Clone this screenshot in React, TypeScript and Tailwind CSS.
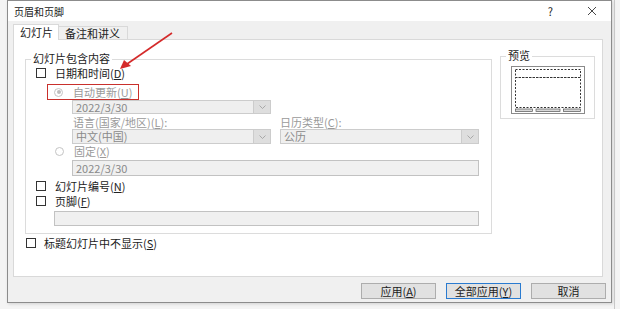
import React from "react";

const font = { fontFamily: '"Noto Sans CJK SC", "Liberation Sans", sans-serif' };

function Key({ k }: { k: string }) {
  return (
    <span>
      (<span className="underline underline-offset-1">{k}</span>)
    </span>
  );
}

function CheckBox() {
  return <div className="w-[10px] h-[10px] border border-[#333333] bg-white shrink-0"></div>;
}

function Radio({ checked }: { checked?: boolean }) {
  return (
    <div className="w-[9px] h-[9px] rounded-full border border-[#c4c4c4] bg-white flex items-center justify-center shrink-0">
      {checked && <div className="w-[4px] h-[4px] rounded-full bg-[#bdbdbd]"></div>}
    </div>
  );
}

function Select({ value, width }: { value: string; width: string }) {
  return (
    <div className={`${width} h-full border border-[#cccccc] bg-[#efefef] flex items-center`}>
      <span className="flex-1 pl-[3px] text-[#8a8a8a] leading-none">{value}</span>
      <div className="w-[17px] h-full bg-[#dedede] border-l border-[#cccccc] flex items-center justify-center">
        <svg width="7" height="4" viewBox="0 0 7 4">
          <path d="M0.5 0.5 L3.5 3.5 L6.5 0.5" fill="none" stroke="#9a9a9a" strokeWidth="0.8" />
        </svg>
      </div>
    </div>
  );
}

function Button({ label, k, focused }: { label: string; k: string; focused?: boolean }) {
  return (
    <div
      className={`w-[75px] h-[16px] flex items-center justify-center bg-[#e1e1e1] border ${
        focused ? "border-[#2a7bd0]" : "border-[#adadad]"
      } text-[#222222] leading-none`}
    >
      {label}
      {k && <Key k={k} />}
    </div>
  );
}

export default function App() {
  return (
    <div className="w-[620px] h-[309px] bg-[#f4f4f4] pl-[7px] relative overflow-hidden text-[11px] leading-[13px]" style={font}>
      <div className="absolute left-[614px] top-0 w-px h-full bg-[#c8c8c8]"></div>
      <div className="w-[605px] h-[303px] border border-[#8c8c8c] bg-[#f0f0f0] flex flex-col shadow-[1px_1px_3px_rgba(0,0,0,0.15)]">
        {/* title bar */}
        <div className="h-[20px] bg-white flex items-center pl-[6px] pr-[14px] text-[10px] text-[#222222]">
          <span className="flex-1">页眉和页脚</span>
          <span className="mr-[34px] text-[11px]">?</span>
          <svg width="10" height="10" viewBox="0 0 10 10">
            <path d="M1 1 L9 9 M9 1 L1 9" stroke="#333" strokeWidth="0.9" />
          </svg>
        </div>

        <div className="flex flex-col px-[5px] pt-[2px]">
          {/* tabs */}
          <div className="flex items-end h-[16px]">
            <div className="h-[16px] w-[46px] bg-white border border-b-0 border-[#d9d9d9] pl-[6px] flex items-center text-[#222222] relative z-10 -mb-px">
              幻灯片
            </div>
            <div className="h-[13px] w-[69px] border border-l-0 border-b-0 border-[#d9d9d9] pl-[6px] flex items-center text-[#222222]">
              备注和讲义
            </div>
          </div>

          {/* panel */}
          <div className="w-[590px] h-[238px] bg-white border border-[#d9d9d9] flex pl-[11px] pt-[19px]">
            <div className="flex flex-col">
              <div className="w-[467px] h-[175px] border border-[#dcdcdc] relative flex flex-col pt-[6px] text-[#222222]">
                <span className="absolute left-[5px] -top-[7px] bg-white px-[2px] leading-none">幻灯片包含内容</span>

                <div className="h-[14px] flex items-center pl-[10px] gap-[9px]">
                  <CheckBox />
                  <span>
                    日期和时间<Key k="D" />
                  </span>
                </div>

                <div className="mt-[4px] h-[16px] flex">
                  <div className="ml-[21px] w-[92px] h-full border-[1.5px] border-[#c9302c] flex items-center pl-[6px] gap-[10px] text-[#9a9a9a]">
                    <Radio checked />
                    <span>
                      自动更新<Key k="U" />
                    </span>
                  </div>
                </div>

                <div className="h-[14px] pl-[46px]">
                  <Select value="2022/3/30" width="w-[199px]" />
                </div>

                <div className="mt-[1px] h-[14px] flex items-center text-[#9a9a9a]">
                  <span className="ml-[47px] w-[207px]">
                    语言(国家/地区)<Key k="L" />:
                  </span>
                  <span>
                    日历类型<Key k="C" />:
                  </span>
                </div>

                <div className="h-[15px] flex pl-[46px] gap-[9px]">
                  <Select value="中文(中国)" width="w-[199px]" />
                  <Select value="公历" width="w-[199px]" />
                </div>

                <div className="h-[14px] flex items-center pl-[29px] gap-[10px] text-[#9a9a9a]">
                  <Radio />
                  <span>
                    固定<Key k="X" />
                  </span>
                </div>

                <div className="mt-[2px] h-[16px] pl-[46px]">
                  <div className="w-[407px] h-full bg-[#f0f0f0] border border-[#c2c2c2] flex items-center pl-[3px] text-[#8a8a8a]">
                    2022/3/30
                  </div>
                </div>

                <div className="mt-[3px] h-[14px] flex items-center pl-[10px] gap-[9px]">
                  <CheckBox />
                  <span>
                    幻灯片编号<Key k="N" />
                  </span>
                </div>

                <div className="mt-[1px] h-[14px] flex items-center pl-[10px] gap-[9px]">
                  <CheckBox />
                  <span>
                    页脚<Key k="F" />
                  </span>
                </div>

                <div className="mt-[3px] h-[15px] pl-[28px]">
                  <div className="w-[425px] h-full bg-[#f0f0f0] border border-[#c2c2c2]"></div>
                </div>
              </div>

              <div className="mt-[2px] h-[14px] flex items-center pl-[1px] gap-[8px] text-[#222222]">
                <CheckBox />
                <span>
                  标题幻灯片中不显示<Key k="S" />
                </span>
              </div>
            </div>

            {/* preview */}
            <div className="ml-[8px] -mt-[3px] w-[95px] h-[63px] border border-[#dcdcdc] relative pl-[10px] pt-[9px]">
              <span className="absolute left-[5px] -top-[7px] bg-white px-[2px] leading-none text-[#222222]">预览</span>
              <svg width="74" height="48" viewBox="0 0 74 48">
                <rect x="0.5" y="0.5" width="73" height="47" fill="white" stroke="#8a8a8a" />
                <rect x="4.5" y="3.5" width="65" height="8" fill="none" stroke="#333" strokeDasharray="2 1.5" />
                <rect x="4.5" y="11.5" width="65" height="30" fill="none" stroke="#333" strokeDasharray="2 1.5" />
                <rect x="4.5" y="43" width="17" height="2.5" fill="#d8d8d8" stroke="#555" strokeWidth="0.7" />
                <rect x="25" y="43" width="24" height="2.5" fill="#d8d8d8" stroke="#555" strokeWidth="0.7" />
                <rect x="52.5" y="43" width="17" height="2.5" fill="#d8d8d8" stroke="#555" strokeWidth="0.7" />
              </svg>
            </div>
          </div>

          {/* buttons */}
          <div className="mt-[6px] flex justify-end gap-[10px]">
            <Button label="应用" k="A" />
            <Button label="全部应用" k="Y" focused />
            <Button label="取消" k="" />
          </div>
        </div>
      </div>

      {/* annotation arrow */}
      <svg className="absolute left-0 top-0 pointer-events-none" width="620" height="309">
        <line x1="172" y1="33" x2="127" y2="64" stroke="#d42a2a" strokeWidth="1.6" />
        <polygon points="120,69 124,60 131,66" fill="#d42a2a" />
      </svg>
    </div>
  );
}
